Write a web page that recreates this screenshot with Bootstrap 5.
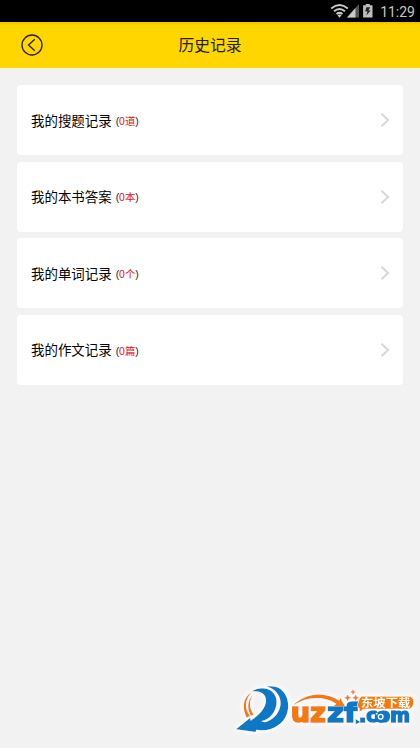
<!DOCTYPE html>
<html lang="zh-CN">
<head>
<meta charset="utf-8">
<meta name="viewport" content="width=device-width, initial-scale=1">
<title>历史记录</title>
<link href="https://cdn.jsdelivr.net/npm/bootstrap@5.3.0/dist/css/bootstrap.min.css" rel="stylesheet">
<style>
body{font-family:Roboto,"Noto Sans CJK SC",sans-serif;background:#f2f2f2;height:748px;overflow:hidden;color:#111}
.statusbar{height:22px;background:#000;color:#c6c6c6;font-size:14px;line-height:22px;padding-right:5px}
.statusbar span{padding-top:1px}
.topbar{height:46px;background:linear-gradient(#e6c100,#ffd600 3px);padding:0 21px}
.topbar h1{font-size:15.8px;line-height:46px;padding-top:2px;font-weight:400;color:#221c00}
.side{width:22px;height:22px}
.history{padding:17px 17px 0;gap:6.4px}
.history .entry{height:70.2px;border-radius:4px;background:#fff;padding:0 13px 0 14px;color:#000;font-size:13.45px}
.entry>span{padding-top:3px}
.count{font-size:10.4px;margin-left:4px;color:#222;font-family:"Liberation Sans","Noto Sans CJK SC",sans-serif}
.count span{color:#e60f0f}
.brandmark{right:0;bottom:0;width:200px;height:73px}
</style>
<script src="https://cdn.jsdelivr.net/npm/bootstrap@5.3.0/dist/js/bootstrap.bundle.min.js"></script>
</head>
<body class="position-relative">
<div class="statusbar d-flex align-items-center justify-content-end">
<svg width="46" height="22" viewBox="0 0 46 22" class="me-1">
<g fill="none" stroke="#c8c8c8" stroke-width="2"><path d="M1.200 8.400Q9.500 1.600 17.800 8.400M4 11.300Q9.500 6.800 15 11.300M6.500 14Q9.500 11.700 12.500 14"/></g>
<path d="M7.500 15.200Q9.500 13.800 11.500 15.200L9.500 17.800z" fill="#c8c8c8"/>
<path d="M29 4V17.500H17z" fill="#555"/><path d="M25.500 8V17.500H17z" fill="#c8c8c8"/>
<path d="M35.800 4h4v1.200h2.700V17.500h-9.400V5.200h2.700z" fill="#bdbdbd"/><path d="M40.200 7.300h-3.800l-1.200 4.300h2.300l-1.200 4 4.400-5.200h-2.300z" fill="#222"/>
</svg><span>11:29</span></div>
<header class="topbar d-flex align-items-center justify-content-between">
<svg class="side" viewBox="0 0 22 22" fill="none" stroke="#2b2400" stroke-width="1.35"><circle cx="11" cy="11" r="10"/><path d="M13.800 5.200L7.500 11l6.300 5.800"/></svg>
<h1 class="m-0">历史记录</h1><span class="side"></span>
</header>
<main class="history d-flex flex-column">
<a class="entry d-flex align-items-center text-decoration-none" href="#"><span>我的搜题记录</span><span class="count">(<span>0道</span>)</span><svg class="ms-auto" width="10" height="14" viewBox="0 0 10 14" fill="none" stroke="#d9d9d9" stroke-width="2.2"><path d="M1.500 .8L8 7l-6.500 6.200"/></svg></a>
<a class="entry d-flex align-items-center text-decoration-none" href="#"><span>我的本书答案</span><span class="count">(<span>0本</span>)</span><svg class="ms-auto" width="10" height="14" viewBox="0 0 10 14" fill="none" stroke="#d9d9d9" stroke-width="2.2"><path d="M1.500 .8L8 7l-6.500 6.200"/></svg></a>
<a class="entry d-flex align-items-center text-decoration-none" href="#"><span>我的单词记录</span><span class="count">(<span>0个</span>)</span><svg class="ms-auto" width="10" height="14" viewBox="0 0 10 14" fill="none" stroke="#d9d9d9" stroke-width="2.2"><path d="M1.500 .8L8 7l-6.500 6.200"/></svg></a>
<a class="entry d-flex align-items-center text-decoration-none" href="#"><span>我的作文记录</span><span class="count">(<span>0篇</span>)</span><svg class="ms-auto" width="10" height="14" viewBox="0 0 10 14" fill="none" stroke="#d9d9d9" stroke-width="2.2"><path d="M1.500 .8L8 7l-6.500 6.200"/></svg></a>
</main>
<svg class="brandmark position-absolute" viewBox="0 0 600 219">
<defs><filter id="halo" x="-20%" y="-20%" width="140%" height="140%"><feMorphology in="SourceAlpha" operator="dilate" radius="3"/><feGaussianBlur stdDeviation="8" result="a"/><feFlood flood-color="#fff"/><feComposite in2="a" operator="in"/><feMerge><feMergeNode/><feMergeNode in="SourceGraphic"/></feMerge></filter></defs>
<g filter="url(#halo)">
<path fill="#0879c6" d="M96 49C114 37 140 37 155 49C175 64 174 94 157 118C148 130 137 136 124 139Q138 145 149 136C176 120 188 92 178 66C170 48 158 39 140 35C169 30 190 42 200 67C211 98 202 133 174 151C155 165 133 169 110 164L106 171L48 163L91 128L92 137C117 121 139 98 138 75C137 56 120 46 96 49Z"/>
<g fill="#f57a0c"><path d="M94 52C67 70 66 100 80 128L90 123C73 101 74 76 94 52Z"/><path d="M98 60C81 80 81 102 93 122L101 119C88 98 86 82 98 60Z"/></g>
<path d="M219 91C260 51 314 49 358 77L361 69L375 94L341 93L349 86C306 61 261 65 219 91Z" fill="#f57a0c"/>
<g font-family="'DejaVu Sans', sans-serif" font-weight="700" stroke-width="5">
<text x="212" y="141" font-size="80" textLength="106" lengthAdjust="spacingAndGlyphs" fill="#f57a0c" stroke="#f57a0c">uz</text>
<text x="321" y="141" font-size="80" textLength="90" lengthAdjust="spacingAndGlyphs" fill="#0879c6" stroke="#0879c6">zf</text>
<text x="417" y="141" font-size="58" textLength="153" lengthAdjust="spacingAndGlyphs" fill="#0879c6" stroke="#0879c6">.com</text></g>
<path d="M407 132l14 9-14 7z" fill="#0879c6"/>
<circle cx="482" cy="126" r="18" fill="#0879c6"/><circle cx="482" cy="125" r="9" fill="#fff"/><circle cx="482" cy="125" r="5" fill="#0879c6"/><circle cx="470" cy="116" r="3" fill="#fff"/>
<path d="M425 64H564Q581 64 581 80Q581 102 562 102H431L418 112V100Q408 96 415 81Q417 67 425 64Z" fill="#f57a0c" stroke="#fff" stroke-width="2"/>
<text x="423" y="95" font-family="'Noto Sans CJK SC', sans-serif" font-size="34" font-weight="700" textLength="148" lengthAdjust="spacingAndGlyphs" fill="#fff">东坡下载</text>
<path d="M399 44l2 5 5 2-5 2-2 5-2-5-5-2 5-2zM383 60l3 6 6 2-6 3-3 6-3-6-6-3 6-2zM407 60l3 6 6 2-6 3-3 6-3-6-6-3 6-2z" fill="#f57a0c" stroke="#f57a0c" stroke-width="1.5"/>
</g></svg>
</body>
</html>
